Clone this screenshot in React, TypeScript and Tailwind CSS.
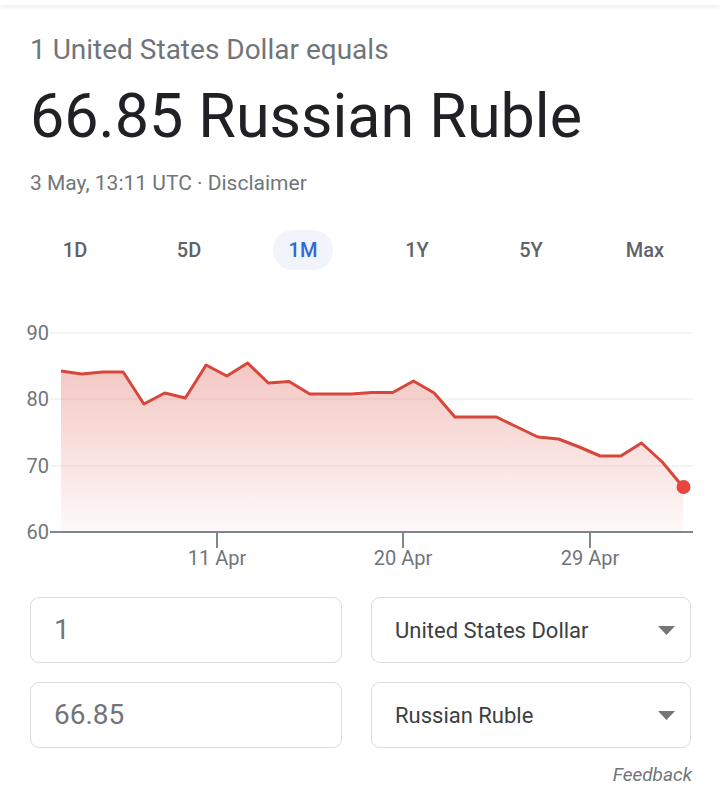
import React from 'react';

const ranges = ['1D', '5D', '1M', '1Y', '5Y', 'Max'];

// y pixel values of the 1M series, one every ~20.73px from x=61
const series = [
  371, 374, 372, 372, 404, 393, 398, 365, 376, 363, 383, 381.5, 394, 394, 394, 392.5, 392.5, 381, 393, 417, 417,
  417, 427, 437, 439, 447, 456, 456, 443, 462, 487,
];

const Chart: React.FC = () => {
  const step = (683 - 61) / (series.length - 1);
  const pts = series.map((y, i) => [61 + i * step, y] as const);
  const line = pts.map(([x, y], i) => `${i === 0 ? 'M' : 'L'}${x.toFixed(1)} ${y}`).join(' ');
  const area = `${line} L683 532 L61 532 Z`;
  const grid = [
    { y: 333, label: '90' },
    { y: 399, label: '80' },
    { y: 466, label: '70' },
  ];
  const ticks = [
    { x: 217, label: '11 Apr' },
    { x: 403, label: '20 Apr' },
    { x: 590, label: '29 Apr' },
  ];

  return (
    <svg width="720" height="260" viewBox="0 310 720 260" className="block">
      <defs>
        <linearGradient id="fill" x1="0" y1="0" x2="0" y2="1">
          <stop offset="0" stopColor="#e06b60" stopOpacity="0.38" />
          <stop offset="1" stopColor="#e06b60" stopOpacity="0.04" />
        </linearGradient>
      </defs>
      {grid.map((g) => (
        <g key={g.label}>
          <line x1="50" x2="693" y1={g.y} y2={g.y} stroke="#f1f1f1" strokeWidth="1.5" />
          <text x="49" y={g.y + 7} textAnchor="end" fontSize="20" fill="#70757a" fontFamily="Roboto, sans-serif">
            {g.label}
          </text>
        </g>
      ))}
      <path d={area} fill="url(#fill)" />
      <path d={line} fill="none" stroke="#d7463a" strokeWidth="3" strokeLinejoin="round" />
      <circle cx="683.5" cy="487" r="7" fill="#e8453c" />
      <line x1="50" x2="693" y1="532" y2="532" stroke="#80868b" strokeWidth="2" />
      <text x="49" y="539" textAnchor="end" fontSize="20" fill="#70757a" fontFamily="Roboto, sans-serif">
        60
      </text>
      {ticks.map((t) => (
        <g key={t.label}>
          <line x1={t.x} x2={t.x} y1="532" y2="548" stroke="#80868b" strokeWidth="2" />
          <text x={t.x} y="565" textAnchor="middle" fontSize="20" fill="#70757a" fontFamily="Roboto, sans-serif">
            {t.label}
          </text>
        </g>
      ))}
    </svg>
  );
};

const Caret: React.FC = () => (
  <svg width="17" height="9" viewBox="0 0 17 9" className="shrink-0">
    <path d="M0 0 H17 L8.5 9 Z" fill="#757575" />
  </svg>
);

const App: React.FC = () => {
  return (
    <div className="w-[720px] h-[800px] bg-white overflow-hidden font-['Roboto',sans-serif]">
      {/* top bar shadow */}
      <div className="h-[5px] bg-white shadow-[0_2px_4px_rgba(0,0,0,0.07)]" />

      <div className="px-[30px] pt-[27px]">
        <div className="text-[28px] leading-[36px] text-[#70757a]">1 United States Dollar equals</div>
        <div className="mt-[12px] text-[61px] leading-[72px] text-[#202124]">66.85 Russian Ruble</div>
        <div className="mt-[17px] text-[21px] leading-[28px] text-[#70757a]">3 May, 13:11 UTC · Disclaimer</div>
      </div>

      {/* range tabs */}
      <div className="mt-[33px] grid grid-cols-6 px-[18px]">
        {ranges.map((r) => (
          <div key={r} className="flex justify-center">
            <div
              className={
                r === '1M'
                  ? 'h-[40px] w-[60px] rounded-full bg-[#f1f5fb] flex items-center justify-center text-[20px] text-[#3367d6] font-medium'
                  : 'h-[40px] w-[60px] flex items-center justify-center text-[20px] text-[#5f6368] font-medium'
              }
            >
              {r}
            </div>
          </div>
        ))}
      </div>

      <div className="mt-[40px]">
        <Chart />
      </div>

      {/* converter */}
      <div className="mt-[27px] px-[30px] grid grid-cols-[312px_320px] gap-x-[29px] gap-y-[19px]">
        <div className="h-[66px] rounded-[9px] border border-[#dadce0] flex items-center px-[23px] text-[28px] text-[#70757a]">
          1
        </div>
        <div className="h-[66px] rounded-[9px] border border-[#dadce0] flex items-center justify-between pl-[23px] pr-[15px] text-[22px] text-[#3c4043]">
          United States Dollar
          <Caret />
        </div>
        <div className="h-[66px] rounded-[9px] border border-[#dadce0] flex items-center px-[23px] text-[28px] text-[#70757a]">
          66.85
        </div>
        <div className="h-[66px] rounded-[9px] border border-[#dadce0] flex items-center justify-between pl-[23px] pr-[15px] text-[22px] text-[#3c4043]">
          Russian Ruble
          <Caret />
        </div>
      </div>

      <div className="mt-[15px] pr-[28px] text-right text-[19px] leading-[24px] italic text-[#70757a]">Feedback</div>
    </div>
  );
};

export default App;
